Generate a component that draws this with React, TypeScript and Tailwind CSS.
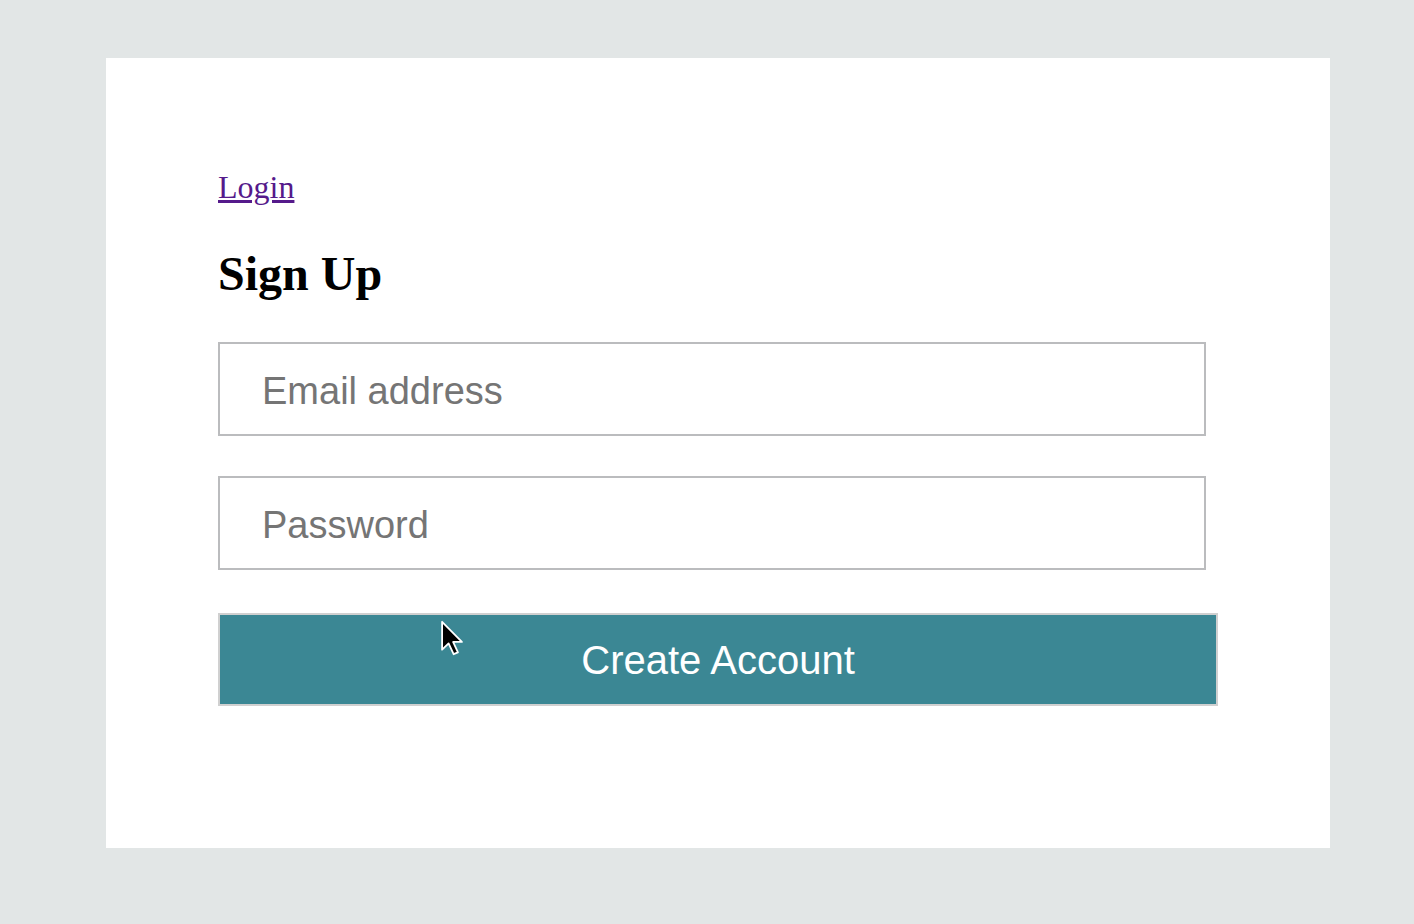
export default function App() {
  return (
    <div className="min-h-screen bg-[#e2e6e6] pt-[58px] pl-[106px]">
      <div className="w-[1224px] h-[790px] bg-white pt-[111px] pl-[112px]">
        <a
          href="#"
          className="block w-fit text-[32px] leading-[36px] text-[#551a8b] underline"
          style={{ fontFamily: '"Liberation Serif", "Times New Roman", serif' }}
        >
          Login
        </a>
        <h1
          className="mt-[41px] text-[48px] leading-[56px] font-bold text-black"
          style={{ fontFamily: '"Liberation Serif", "Times New Roman", serif' }}
        >
          Sign Up
        </h1>
        <form
          className="mt-[40px] flex flex-col"
          style={{ fontFamily: '"Liberation Sans", Arial, Helvetica, sans-serif' }}
          onSubmit={(e) => e.preventDefault()}
        >
          <input
            type="email"
            placeholder="Email address"
            className="w-[988px] h-[94px] border-2 border-[#bbbcbe] pl-[42px] pt-[4px] text-[38px] text-black placeholder:text-[#757575] outline-none"
          />
          <input
            type="password"
            placeholder="Password"
            className="mt-[40px] w-[988px] h-[94px] border-2 border-[#bbbcbe] pl-[42px] pt-[5px] text-[38px] text-black placeholder:text-[#757575] outline-none"
          />
          <button
            type="submit"
            className="relative mt-[43px] w-[1000px] h-[93px] border-2 border-[#d0d0d0] bg-[#3b8794] text-white text-[40px]"
          >
            Create Account
            <svg
              className="absolute left-[220px] top-[5px] pointer-events-none"
              width="24"
              height="36"
              viewBox="0 0 13 20"
            >
              <path
                d="M1 1 L1 16.5 L4.6 13 L7.4 19 L9.8 18 L7.1 12.2 L12 12.2 Z"
                fill="#000"
                stroke="#fff"
                strokeWidth="1"
                strokeLinejoin="round"
              />
            </svg>
          </button>
        </form>
      </div>
    </div>
  );
}
